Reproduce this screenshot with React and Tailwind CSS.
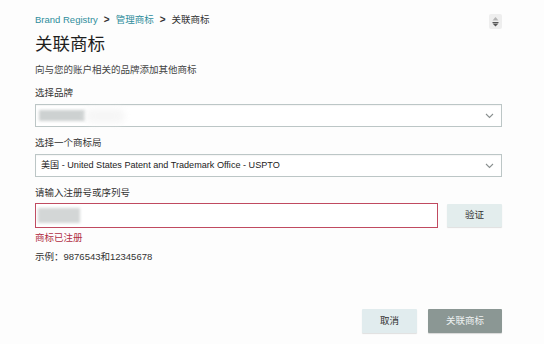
import React from "react";

const Chevron = () => (
  <svg width="9" height="6" viewBox="0 0 9 6" className="shrink-0">
    <path d="M1 1l3.5 3.5L8 1" fill="none" stroke="#8a9090" strokeWidth="1.1" />
  </svg>
);

export default function App() {
  return (
    <div
      className="w-[544px] h-[344px] bg-[#fdfdfd] relative overflow-hidden text-[#333]"
      style={{ fontFamily: '"Liberation Sans", "Noto Sans CJK SC", sans-serif' }}
    >
      <div className="absolute left-[489px] top-[14px] w-[13px] h-[15px] bg-[#eeeeee] rounded-[2px] flex items-center justify-center">
        <svg width="9" height="11" viewBox="0 0 9 11">
          <path d="M4.5 1L7.5 4.5H1.5z" fill="#b5b5b5" />
          <rect x="1.5" y="6" width="6" height="1" fill="#555" />
          <path d="M1.5 7.5H7.5L4.5 10.5z" fill="#555" />
        </svg>
      </div>

      <div className="flex flex-col pl-[35px] pr-[42px] pt-[13px]">
        <div className="flex items-center h-[14px] text-[9.5px] leading-[14px]">
          <span className="text-[#2f8d9c]">Brand Registry</span>
          <span className="mx-[6px] text-[#333] font-bold text-[10px]">&gt;</span>
          <span className="text-[#2f8d9c]">管理商标</span>
          <span className="mx-[6px] text-[#333] font-bold text-[10px]">&gt;</span>
          <span className="text-[#333]">关联商标</span>
        </div>

        <div className="mt-[5px] h-[24px] text-[17.5px] leading-[24px] text-[#1e1e1e]">关联商标</div>

        <div className="mt-[7px] h-[14px] text-[9.5px] leading-[14px] text-[#444]">
          向与您的账户相关的品牌添加其他商标
        </div>

        <div className="mt-[9px] h-[14px] text-[9.5px] leading-[14px] text-[#333]">选择品牌</div>
        <div className="mt-[4px] h-[23px] border border-[#bcc6c6] bg-white flex items-center justify-between pl-[3px] pr-[7px] shadow-[inset_0_1px_1px_rgba(0,0,0,0.04)]">
          <div className="flex items-center">
            <div className="w-[46px] h-[11px] bg-[#cdd1d1] blur-[1.5px]" />
            <div className="w-[40px] h-[14px] bg-[#f6f6f6] blur-[3px] rounded-full" />
          </div>
          <Chevron />
        </div>

        <div className="mt-[9px] h-[14px] text-[9.5px] leading-[14px] text-[#333]">选择一个商标局</div>
        <div className="mt-[4px] h-[23px] border border-[#bcc6c6] bg-white flex items-center justify-between pl-[5px] pr-[7px] shadow-[inset_0_1px_1px_rgba(0,0,0,0.04)]">
          <span className="text-[9.1px] text-[#222]">美国 - United States Patent and Trademark Office - USPTO</span>
          <Chevron />
        </div>

        <div className="mt-[9px] h-[14px] text-[9.5px] leading-[14px] text-[#333]">请输入注册号或序列号</div>
        <div className="mt-[3px] flex items-center gap-[9px]">
          <div className="w-[403px] h-[25px] border border-[#c04a60] bg-white flex items-center pl-[2px]">
            <div className="w-[42px] h-[15px] bg-[#d3d6d6] blur-[1.5px]" />
          </div>
          <button className="w-[55px] h-[23px] bg-[#e3eded] text-[9.5px] text-[#333] rounded-[1px] shadow-[0_1px_1px_rgba(0,0,0,0.12)]">
            验证
          </button>
        </div>

        <div className="mt-[3px] h-[14px] text-[9.5px] leading-[14px] text-[#b12f45]">商标已注册</div>
        <div className="mt-[5px] h-[14px] text-[9.5px] leading-[14px] text-[#333]">示例：9876543和12345678</div>

        <div className="mt-[45px] flex justify-end gap-[11px]">
          <button className="w-[55px] h-[24px] bg-[#e1ecee] text-[9.5px] text-[#333] rounded-[1px] shadow-[0_1px_1px_rgba(0,0,0,0.12)]">
            取消
          </button>
          <button className="w-[74px] h-[24px] bg-[#8b9794] text-[9.5px] text-[#eef2f2] rounded-[1px] shadow-[0_1px_1px_rgba(0,0,0,0.15)]">
            关联商标
          </button>
        </div>
      </div>
    </div>
  );
}
